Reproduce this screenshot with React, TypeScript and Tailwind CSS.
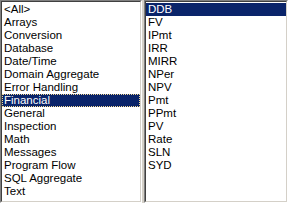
import React from "react";

const left = ["<All>","Arrays","Conversion","Database","Date/Time","Domain Aggregate","Error Handling","Financial","General","Inspection","Math","Messages","Program Flow","SQL Aggregate","Text"];
const right = ["DDB","FV","IPmt","IRR","MIRR","NPer","NPV","Pmt","PPmt","PV","Rate","SLN","SYD"];

function ListBox({ items, sel, focus, className }: { items: string[]; sel: number; focus?: boolean; className: string }) {
  return (
    <div className={`border border-t-[#808080] border-l-[#808080] border-b-white border-r-white ${className}`}>
      <div className="h-full border border-t-[#404040] border-l-[#404040] border-b-[#d4d0c8] border-r-[#d4d0c8] bg-white overflow-hidden">
        <div className="flex flex-col pt-[1px]">
          {items.map((t, i) => (
            <div
              key={t}
              className={`h-[13px] leading-[13px] pl-[2px] whitespace-nowrap ${i === sel ? "bg-[#0a246a] text-white" : "text-black"} ${i === sel && focus ? "outline outline-1 outline-dotted outline-offset-[-1px] outline-[#f5db95]" : ""}`}
            >
              {t}
            </div>
          ))}
        </div>
      </div>
    </div>
  );
}

export default function App() {
  return (
    <div className="w-[288px] h-[203px] bg-[#d4d0c8] flex gap-[2px] text-[11.5px]" style={{ fontFamily: '"Liberation Sans", Arial, sans-serif' }}>
      <ListBox items={left} sel={7} focus className="w-[142px] h-[203px]" />
      <ListBox items={right} sel={0} className="w-[144px] h-[203px]" />
    </div>
  );
}
